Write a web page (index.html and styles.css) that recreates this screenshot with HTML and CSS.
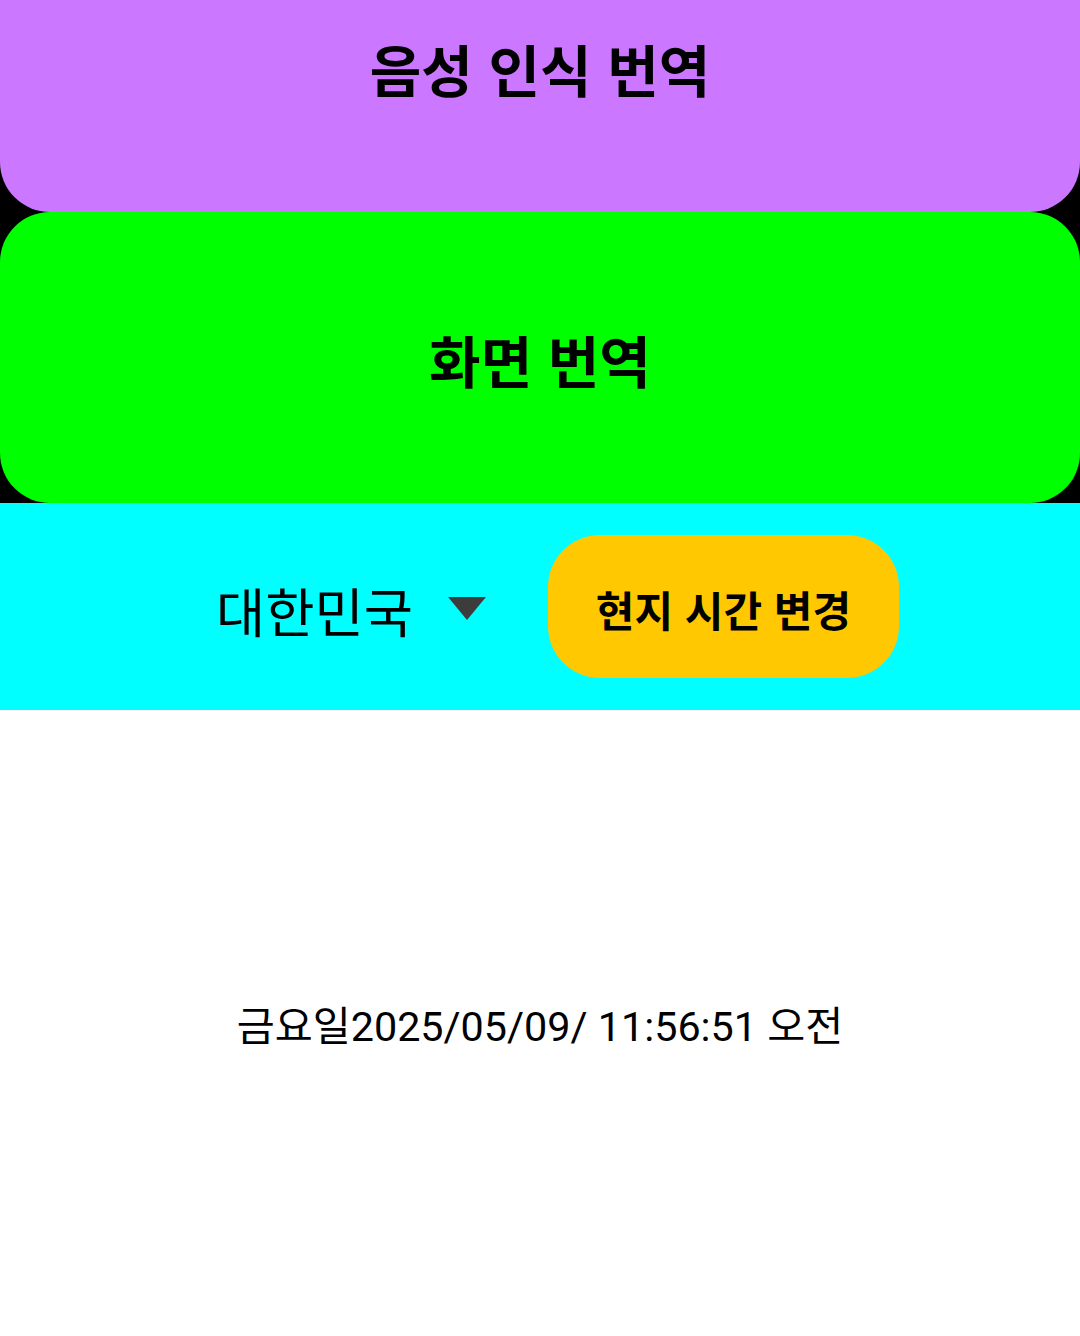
FILE: index.html
```html
<!DOCTYPE html>
<html lang="ko">
<head>
    <meta charset="utf-8">
    <title>번역</title>
    <link rel="stylesheet" href="styles.css">
</head>
<body>
    <div class="app">
        <div class="top">
            <button class="big voice">음성 인식 번역</button>
            <button class="big screen">화면 번역</button>
        </div>

        <div class="bar">
            <div class="spinner">
                <span class="country">대한민국</span>
                <span class="arrow"></span>
            </div>
            <button class="local">현지 시간 변경</button>
        </div>

        <div class="clock">
            <span id="now">금요일2025/05/09/ 11:56:51 오전</span>
        </div>
    </div>
</body>
</html>
```

FILE: styles.css
```css
html, body {
    margin: 0;
    padding: 0;
    height: 100%;
}
body {
    font-family: Roboto, "Noto Sans CJK KR", sans-serif;
    background: #fff;
    color: #000;
}
.app {
    display: flex;
    flex-direction: column;
    height: 100%;
}
.top {
    background: #000;
    display: flex;
    flex-direction: column;
}
button {
    font-family: "Noto Sans CJK KR", sans-serif;
    border: none;
    margin: 0;
    color: #000;
    font-weight: bold;
    cursor: pointer;
}
.big {
    width: 100%;
    font-size: 56px;
    display: flex;
    justify-content: center;
}
.voice {
    height: 212px;
    background: #cc77ff;
    border-radius: 0 0 50px 50px;
    align-items: flex-start;
    padding-top: 27px;
}
.screen {
    height: 291px;
    background: #00ff00;
    border-radius: 50px;
    align-items: center;
    padding-top: 2px;
}
.bar {
    background: #00ffff;
    height: 207px;
    display: flex;
    align-items: center;
    justify-content: center;
    gap: 62px;
}
.spinner {
    display: flex;
    align-items: center;
    padding-left: 35px;
}
.country {
    font-family: "Noto Sans CJK KR", sans-serif;
    font-size: 53.5px;
    line-height: 1;
    padding-top: 6px;
}
.arrow {
    width: 0;
    height: 0;
    margin-left: 35px;
    margin-top: 4px;
    border-left: 19px solid transparent;
    border-right: 19px solid transparent;
    border-top: 23px solid #3c3c3c;
}
.local {
    width: 351px;
    height: 143px;
    background: #ffc800;
    border-radius: 52px;
    font-size: 42px;
    padding-top: 4px;
}
.clock {
    flex: 1;
    display: flex;
    align-items: center;
    justify-content: center;
    font-size: 41.3px;
}
```
